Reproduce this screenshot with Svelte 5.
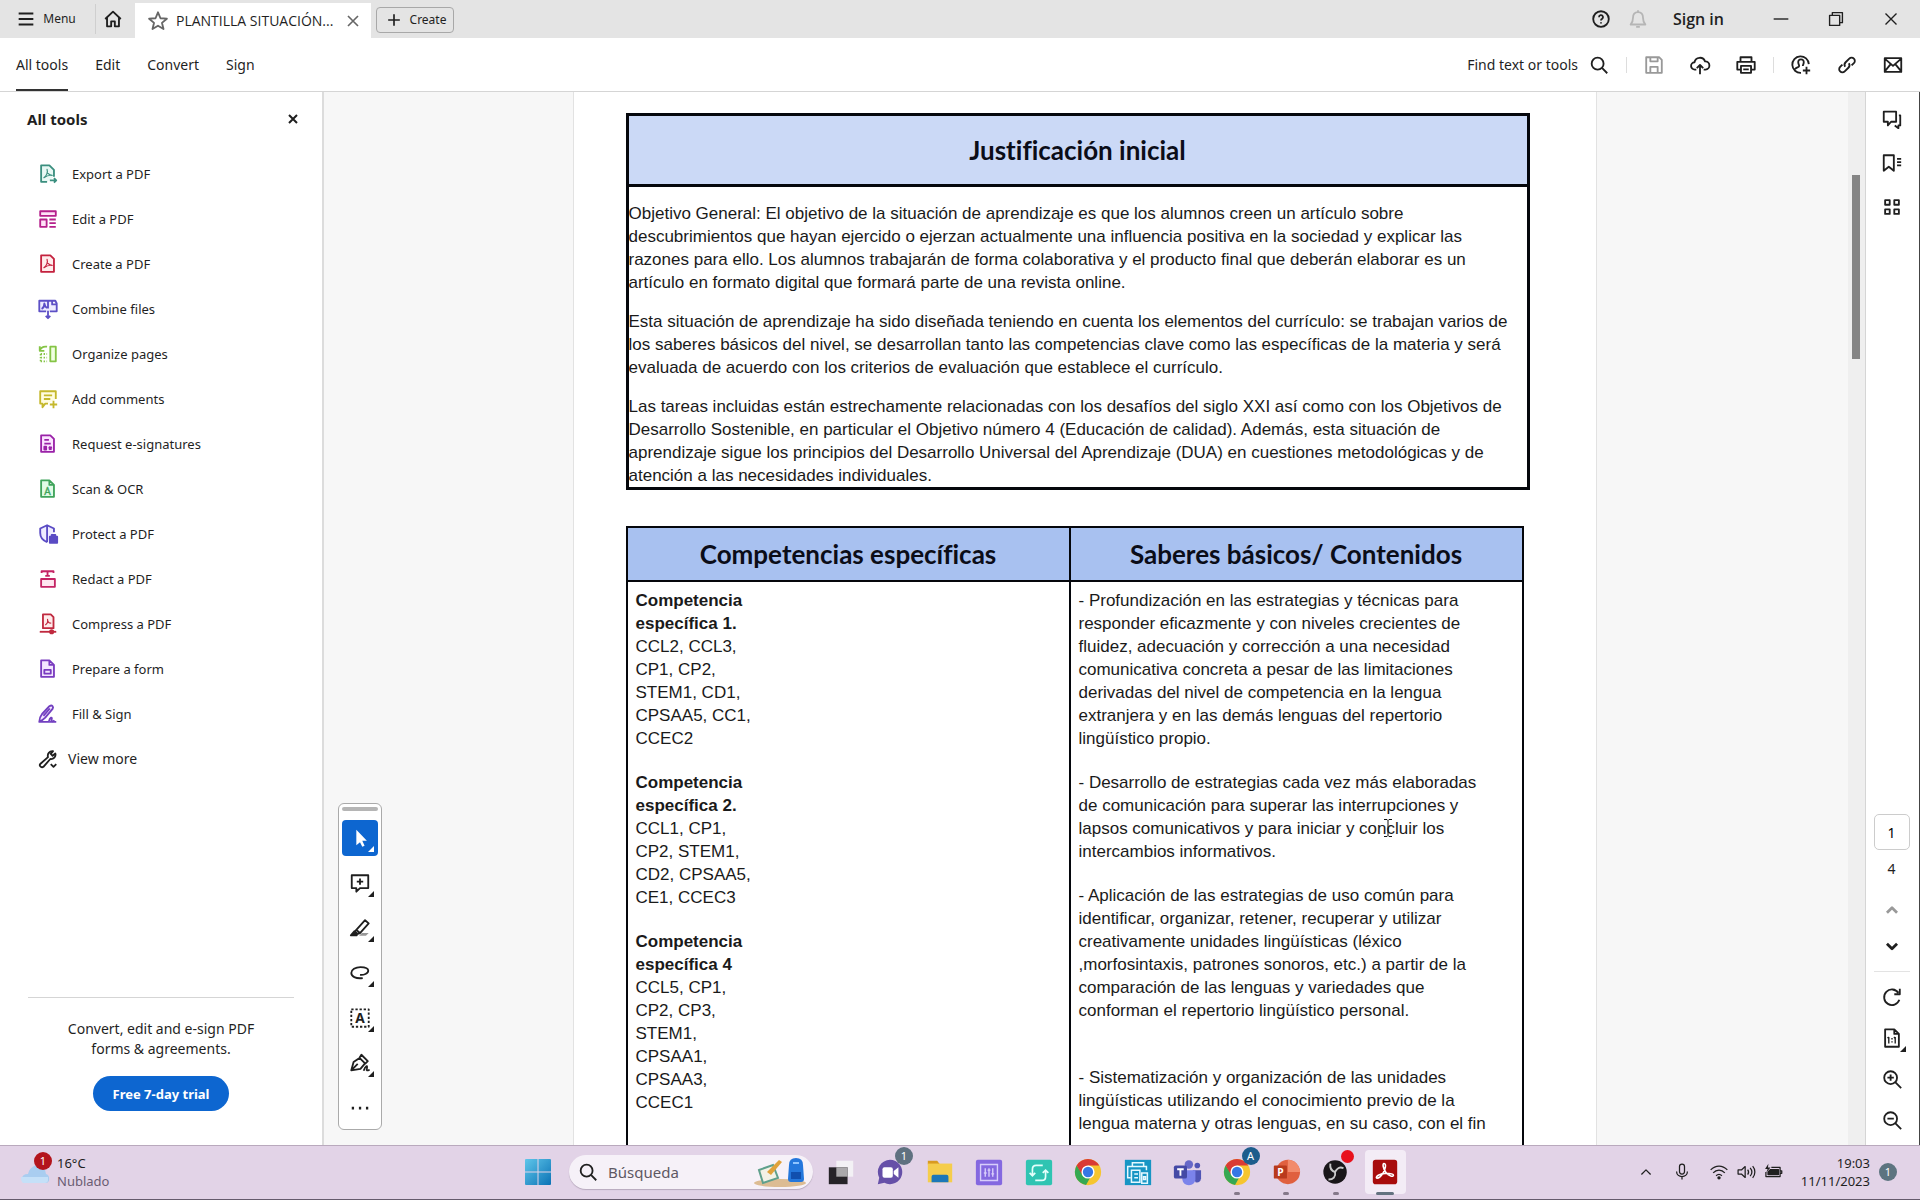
<script lang="ts">
	const docIcon = 'M4.5 2.5h8l5 5v12h-13z';
	const acro = 'M7.5 16c3-2 4.500-6 3.500-9 0 4 2 6 5.500 6.500-3-.5-6 .5-9 2.500z';

	const icons: Record<string, string> = {
		menu: '<path d="M4 6h16M4 12h16M4 18h16"/>',
		home: '<path d="M3.500 12L12 4l8.500 8M5.500 10.500V20h4.500v-5.500h4V20h4.500v-9.500"/>',
		star: '<path d="M12 2.500l2.700 6.500 7 .5-5.400 4.500 1.700 6.800-6-3.700-6 3.700 1.700-6.800L2.300 9.500l7-.5z"/>',
		close: '<path d="M6 6l12 12M18 6L6 18"/>',
		plus: '<path d="M12 5v14M5 12h14"/>',
		help: '<circle cx="12" cy="12" r="8.500"/><path d="M9.800 10a2.200 2.200 0 1 1 3.300 1.900c-.8.400-1.100.800-1.100 1.600"/><path d="M12 15.500v1.500"/>',
		bell: '<path d="M4 18h16c-1.500-1.500-2.500-3-2.500-7 0-4-2-6.500-5.500-6.500S6.500 7 6.500 11c0 4-1 5.500-2.500 7zM10 20.500h4M12 2.500v2"/>',
		minimize: '<path d="M4 12h16"/>',
		restore: '<path d="M5 8h11v11H5zM8 8V5h11v11h-3"/>',
		search: '<circle cx="10.500" cy="10.500" r="6.500"/><path d="M15.500 15.500L21 21"/>',
		save: '<path d="M3.500 3.500h14l3 3v14h-17zM8 3.500V8h8V3.500M8 20.500V14h8v6.500"/>',
		cloud: '<path d="M8 17H6.500a4 4 0 0 1-.500-8A6 6 0 0 1 17.500 8a4.500 4.500 0 0 1 .500 9h-2M12 22V12M8.500 15.500L12 12l3.500 3.500"/>',
		print: '<path d="M6 17H2.500V8.500h19V17H18M6 8.500v-5h12v5M6.500 13h11v7.500h-11zM9 16.700h6"/>',
		person: '<path d="M20.500 11A9 9 0 1 0 12 20.500M12 5.800c-2.200 0-3.200 1.600-3 3.700.2 1.700 1 2.500 1 3.500 0 1.500-3.500 1.500-4.500 3.500M12 5.800c2.200 0 3.200 1.600 3 3.700-.200 1.700-1 2.500-1 3.500M18 14v8M14 18h8"/>',
		link: '<path d="M10 14a4 4 0 0 1 .5-5l4-4a3.500 3.500 0 0 1 5 5l-2.500 2.500M14 10a4 4 0 0 1-.5 5l-4 4a3.500 3.500 0 0 1-5-5l2.500-2.500"/>',
		mail: '<path d="M3 4.500h18v15H3zM3 5l9 8 9-8M3 19l6.500-8M21 19l-6.500-8"/>',
		comments: '<path d="M3 4h13.500v11H11l-3.500 4v-4H3zM19.500 8H21v11h-2v3l-4-3"/>',
		bookmark: '<path d="M3 3.500h11v17l-5.500-4.500L3 20.500zM17.500 7.500H22M17.500 11H22M17.500 14.500H22"/>',
		grid: '<path d="M4.500 4.500h5v5h-5zM14.500 4.500h5v5h-5zM4.500 14.500h5v5h-5zM14.500 14.500h5v5h-5z"/>',
		up: '<path d="M6.500 15l5.500-5.500 5.500 5.500"/>',
		down: '<path d="M6.500 9.500L12 15l5.500-5.500"/>',
		rotate: '<path d="M19 7.500A8.500 8.500 0 1 0 20 15M20.500 3v6h-6"/>',
		fit: '<path d="M4.500 2.500h10l5 5v14h-15zM14.500 2.500v5h5"/><path d="M8.500 11v7M15.500 11v7M7 12l1.500-1M14 12l1.500-1M12 12v1.500M12 15.500v1.500" stroke-width="1.500"/>',
		zoomIn: '<circle cx="10.500" cy="10.500" r="7"/><path d="M15.500 15.500L22 22M7 10.500h7M10.500 7v7"/>',
		zoomOut: '<circle cx="10.500" cy="10.500" r="7"/><path d="M15.500 15.500L22 22M7 10.500h7"/>',
		select: '<path d="M8 3v17l4-3.500 2.500 5 2.500-1-2.500-5.500h5z" fill="currentColor" stroke="none"/>',
		addNote: '<path d="M3 3.500h18v14h-9l-4 4v-4H3zM12 7v7M8.500 10.500h7"/>',
		highlight: '<path d="M8 14L17.500 3.500l4 3.500L12 17.500zM8 14l-1.500 2 3 2.500 2.500-1"/><path d="M6 15.500L2 20h6.500z" fill="currentColor"/><path d="M11 20.500l3-3h7.500l-3 3z" fill="#999" stroke="none"/>',
		loop: '<path d="M12 14c4 .5 9-1.500 9-4.500 0-3-4-4-8.500-4C7 5.500 2.500 8.500 2.500 12s4.500 6.500 12.500 5.500"/>',
		text: '<path d="M2.500 2.500h19v19h-19z" stroke-dasharray="2.500 2"/><text x="12" y="17.500" text-anchor="middle" font-family="Noto Sans" font-weight="700" font-size="15" fill="currentColor" stroke="none">A</text>',
		pen: '<path d="M2.500 20l2.500-9 6.500-4.500 6 6-5 6zM2.500 20l7-7M11 7l2.500-4 7 7-3 3"/><path d="M16 20.500c2-6 4.500-6.500 3.500-2.500-1 3 1 2 3 1.500"/>',
		more: '<path d="M3 12h2.500M10.800 12h2.500M18.500 12H21" stroke-width="3"/>',
		exportPdf: `<path d="M11 20.500H4.500v-18h9l5 5V15"/><path d="${acro}" stroke-width="1.300"/><path d="M14 19h7M18.500 16.500L21 19l-2.500 2.500"/>`,
		editPdf: '<path d="M3.500 3.500h17v5h-17zM3.500 12.500h7v8h-7zM13.500 12.500h7M13.500 16.500h7M13.500 20.500h7"/>',
		createPdf: `<path d="M4.500 2.500h10l4 4v14h-14z"/><path d="${acro}" stroke-width="1.300"/>`,
		combine: '<path d="M10 14.500H2.500V3H20l1.500 3v8.500H14M12 3v8.500M5 12c2-1 3-3 3-6 .5 3 1.500 4 3 5M16.500 3v4h5M12 14v8M9.500 19.500L12 22l2.500-2.500"/>',
		organize: '<path d="M14.500 4h6v16h-6z"/><path d="M3 8.500c1-3.500 4-5 8-4.500M3 3.500v5h5" fill="none"/><path d="M4 12h7M4 16h7M4 20h7M4 12v8" stroke-dasharray="1.500 1.700"/>',
		comment: '<path d="M12 17H9l-3 4v-4H3.500V3.500h17V12M7.500 8h9M7.500 12h7M18 14v8M14 18h8"/>',
		esign: '<path d="M4.500 2.500h10l4 4v14h-14zM8 7.500h5M8 11.500h7"/><path d="M8 15h2v3H8zM13 15l3 3M16 15l-3 3"/>',
		ocr: '<path d="M4.500 2.500h9l5 5v13h-14zM13.500 2.500v5h5"/><text x="11.500" y="18" text-anchor="middle" font-family="Noto Sans" font-size="11" fill="currentColor" stroke-width=".4">A</text>',
		protect: '<path d="M11 21c-5-2-7.500-6-7.500-10V6L11 2.500 18.500 6v4M11 2.500V21"/><path d="M14 15h8v6.500h-8zM16 15v-2h4v2" fill="currentColor"/>',
		redact: '<path d="M4.500 12h15v8.500h-15zM5 5.500v-2h13v2M11.500 3.500V9M9 8.500h5"/>',
		compress: '<path d="M6.500 1.500h8.500l3 3v12H6.500z"/><path d="M9 13c2-1 3-3.500 2.500-6 0 3 1.500 4 4 4" stroke-width="1.300"/><path d="M3 20.500h18"/><circle cx="16" cy="20.500" r="1.800" fill="currentColor"/>',
		form: `<path d="M4.500 2.500h9l5 5v13h-14zM13.500 2.500v5h5M8 13h7v4H8z"/>`,
		fillSign: '<path d="M2.500 20.500c0-4 1-6 3-8.500l8-8.500c3-2 5 .5 3.500 3L9 16c-2 2-4 3.500-6.500 4.500zH21M7 14l7-8"/><path d="M13 20c1-5 4-5 3-2s2 2 3 1"/>',
		wrench: '<path d="M3.500 17.500l8.500-7.500c-1-3.500 1.500-7 5.500-6.500l-2.500 3 2 2 3-2.500c1 3.500-2 6.500-5.500 6L7 20.500c-2 1.500-5-1-3.500-3z"/><path d="M15 17.500l3 3 3-3"/>',
		mic: '<rect x="9" y="2.500" width="6" height="12" rx="3"/><path d="M5.500 11.500c0 8 13 8 13 0M12 17.500V21"/>',
		wifi: '<path d="M2 9.500c6-6 14-6 20 0M5 13c4-4.500 10-4.500 14 0M8.500 16.500c2-2 5-2 7 0"/><circle cx="12" cy="19" r="1.300" fill="currentColor"/>',
		volume: '<path d="M2.500 9.500h4L11 5.500v13l-4.500-4h-4zM14 9c1.500 2 1.500 4 0 6M17 7c2.500 3 2.500 7 0 10M20 5c3.500 4 3.500 10 0 14"/>',
		battery: '<path d="M10 6.500h10.500v11h-17V12M21 10.500h1.500v3H21"/><path d="M9 9h9.500v6H6v-3z" fill="currentColor"/><path d="M6.500 2L2.500 8.500h3L4 12.500 9 6.500H6z" fill="currentColor" stroke="none"/>'
	};

	const tools = [
		{ icon: 'exportPdf', label: 'Export a PDF', color: '#3b8f7f', fill: '#e8f8f4' },
		{ icon: 'editPdf', label: 'Edit a PDF', color: '#b5208c', fill: '#ffe3f7' },
		{ icon: 'createPdf', label: 'Create a PDF', color: '#c4223f', fill: '#ffecec' },
		{ icon: 'combine', label: 'Combine files', color: '#5d50c6', fill: '#eeecff' },
		{ icon: 'organize', label: 'Organize pages', color: '#85c446', fill: '#f1ffe2' },
		{ icon: 'comment', label: 'Add comments', color: '#c5b82c', fill: '#fffce0' },
		{ icon: 'esign', label: 'Request e-signatures', color: '#9a22a8', fill: '#fbe5ff' },
		{ icon: 'ocr', label: 'Scan & OCR', color: '#3fa45b', fill: '#e0fbe6' },
		{ icon: 'protect', label: 'Protect a PDF', color: '#5a4bc4', fill: '#eeecff' },
		{ icon: 'redact', label: 'Redact a PDF', color: '#c42465', fill: '#ffe6f0' },
		{ icon: 'compress', label: 'Compress a PDF', color: '#c0293f', fill: '#ffecec' },
		{ icon: 'form', label: 'Prepare a form', color: '#7a3cc0', fill: '#f3e6ff' },
		{ icon: 'fillSign', label: 'Fill & Sign', color: '#7240c0', fill: '#f3e6ff' }
	];

	const quickTools = ['select', 'addNote', 'highlight', 'loop', 'text', 'pen'];

	const intro = [
		'Objetivo General: El objetivo de la situación de aprendizaje es que los alumnos creen un artículo sobre\ndescubrimientos que hayan ejercido o ejerzan actualmente una influencia positiva en la sociedad y explicar las\nrazones para ello. Los alumnos trabajarán de forma colaborativa y el producto final que deberán elaborar es un\nartículo en formato digital que formará parte de una revista online.',
		'Esta situación de aprendizaje ha sido diseñada teniendo en cuenta los elementos del currículo: se trabajan varios de\nlos saberes básicos del nivel, se desarrollan tanto las competencias clave como las específicas de la materia y será\nevaluada de acuerdo con los criterios de evaluación que establece el currículo.',
		'Las tareas incluidas están estrechamente relacionadas con los desafíos del siglo XXI así como con los Objetivos de\nDesarrollo Sostenible, en particular el Objetivo número 4 (Educación de calidad). Además, esta situación de\naprendizaje sigue los principios del Desarrollo Universal del Aprendizaje (DUA) en cuestiones metodológicas y de\natención a las necesidades individuales.'
	];

	const competencias = [
		{ title: 'Competencia\nespecífica 1.', codes: 'CCL2, CCL3,\nCP1, CP2,\nSTEM1, CD1,\nCPSAA5, CC1,\nCCEC2' },
		{ title: 'Competencia\nespecífica 2.', codes: 'CCL1, CP1,\nCP2, STEM1,\nCD2, CPSAA5,\nCE1, CCEC3' },
		{ title: 'Competencia\nespecífica 4', codes: 'CCL5, CP1,\nCP2, CP3,\nSTEM1,\nCPSAA1,\nCPSAA3,\nCCEC1' }
	];

	const saberes = [
		'- Profundización en las estrategias y técnicas para\nresponder eficazmente y con niveles crecientes de\nfluidez, adecuación y corrección a una necesidad\ncomunicativa concreta a pesar de las limitaciones\nderivadas del nivel de competencia en la lengua\nextranjera y en las demás lenguas del repertorio\nlingüístico propio.',
		'- Desarrollo de estrategias cada vez más elaboradas\nde comunicación para superar las interrupciones y\nlapsos comunicativos y para iniciar y concluir los\nintercambios informativos.',
		'- Aplicación de las estrategias de uso común para\nidentificar, organizar, retener, recuperar y utilizar\ncreativamente unidades lingüísticas (léxico\n,morfosintaxis, patrones sonoros, etc.) a partir de la\ncomparación de las lenguas y variedades que\nconforman el repertorio lingüístico personal.',
		'- Sistematización y organización de las unidades\nlingüísticas utilizando el conocimiento previo de la\nlengua materna y otras lenguas, en su caso, con el fin'
	];

	const chrome =
		'<circle cx="16" cy="16" r="14" fill="#f6c52f"/><path d="M3.900 9a14 14 0 0 0 10 20.900L20 19l-9 .500z" fill="#35a853"/><path d="M3.900 9L10 19.500 16 9h12a14 14 0 0 0-24.100 0z" fill="#d93a35"/><circle cx="16" cy="16" r="7" fill="#fff"/><circle cx="16" cy="16" r="5.500" fill="#3577e5"/>';

	// Taskbar app tiles, drawn on a 32 unit grid
	const apps = [
		{ name: 'Task view', art: '<path d="M11 4h18v17H11z" fill="#f3f1f5"/><path d="M3 11h20v18H3z" fill="#262328"/><path d="M11 11h12v10H11z" fill="#aaa8ab"/>' },
		{ name: 'Chat', badge: '1', badgeColor: '#5f7180', art: '<path d="M16 3a13 13 0 1 1-6 24.500L3 29l1.500-7A13 13 0 0 1 16 3z" fill="#6650a8"/><rect x="8" y="11" width="11" height="11" rx="2" fill="#fff"/><path d="M20 15l5-4v11l-5-4z" fill="#fff"/>' },
		{ name: 'Explorer', art: '<path d="M3 4h10l3 4h-13z" fill="#d99b20"/><path d="M3 7h26v20H3z" fill="#f5cd4c"/><path d="M7 27v-6q0-2 2-2h14q2 0 2 2v6z" fill="#1c77b8"/>' },
		{ name: 'Mixer', art: '<rect x="2" y="3" width="28" height="27" rx="2" fill="#8468e0"/><path d="M7 8h18v17H7zM12 12v9M16 12v9M20 12v9M10.500 17h3M14.500 14h3M18.500 18h3" fill="none" stroke="#d7cdfb" stroke-width="1.500"/>' },
		{ name: 'Update', art: '<rect x="2" y="3" width="28" height="27" rx="2" fill="#2fc4b2"/><path d="M20 9h-7q-4 0-4 4v7M6 17l3 3 3-3M12 25h7q4 0 4-4v-7M20 17l3-3 3 3" fill="none" stroke="#e3fffb" stroke-width="1.800"/>' },
		{ name: 'Chrome', art: chrome },
		{ name: 'Printer', art: '<path d="M2 3h28v27H2z" fill="#1795c4"/><path d="M10 10V6h12v4M8 22H5V10h20v4M9 14h9v13H9zM12 18h4M12 22h4M20 17h6v11h-6zM22 21h2v3h-2z" fill="none" stroke="#e4f8ff" stroke-width="1.600"/>' },
		{ name: 'Teams', art: '<circle cx="18" cy="8" r="4.500" fill="#6668c8"/><circle cx="27" cy="9" r="3" fill="#5055b5"/><path d="M22 14h9v9q-1 5-6 4z" fill="#5055b5"/><path d="M11 14h14v10q-1 6-7 6t-7-6z" fill="#7b83eb"/><rect x="2" y="9" width="14" height="14" rx="2" fill="#4449a5"/><path d="M5.500 13h7M9 13v7" stroke="#fff" stroke-width="2"/>' },
		{ name: 'Chrome profile', badge: 'A', badgeColor: '#1d5d8c', running: true, art: chrome },
		{ name: 'PowerPoint', running: true, art: '<circle cx="18" cy="16" r="13" fill="#e0603f"/><path d="M18 3a13 13 0 0 1 13 13H18z" fill="#f28b6b"/><rect x="3" y="9" width="14" height="14" rx="1" fill="#b93a1c"/><text x="10" y="20" text-anchor="middle" font-family="Noto Sans" font-size="11" font-weight="700" fill="#fff">P</text>' },
		{ name: 'OBS', badge: ' ', badgeColor: '#e8101c', running: true, art: '<circle cx="15" cy="16" r="12.500" fill="#191619"/><path d="M10 7c-1 6 2 8 5 9 2-4 5-6 9-4M15 16c1 5-2 8-7 8" fill="none" stroke="#c9c9c9" stroke-width="2"/>' },
		{ name: 'Acrobat', active: true, art: '<rect x="3" y="3" width="26" height="26" rx="3" fill="#a80c0c"/><path d="M15 7c3 0 1 7-1 10s-5 6-7 5.500c-1.500-2 5-5 9-5s9 0 9 2-5 1-8-3-4-9.500-2-9.500z" fill="none" stroke="#fff" stroke-width="1.700"/>' }
	];

	let currentPage = $state('1');
	let activeTool = $state('select');
	let query = $state('');
</script>

{#snippet icon(name: string, size = 'md')}
	<svg class="icon {size}" viewBox="0 0 24 24" aria-hidden="true">{@html icons[name]}</svg>
{/snippet}

<div class="app">
	<header class="titlebar">
		<button class="menu">{@render icon('menu')}<span>Menu</span></button>
		<button class="home" aria-label="Home">{@render icon('home')}</button>
		<div class="tab">
			<span class="star">{@render icon('star')}</span>
			<span class="name">PLANTILLA SITUACIÓN...</span>
			<button class="grey" aria-label="Close tab">{@render icon('close', 'sm')}</button>
		</div>
		<button class="create">{@render icon('plus', 'sm')}<span>Create</span></button>
		<div class="window">
			<button aria-label="Help">{@render icon('help')}</button>
			<button class="bell" aria-label="Notifications">{@render icon('bell')}</button>
			<button class="signin">Sign in</button>
			<button class="wide" aria-label="Minimize">{@render icon('minimize', 'md thin')}</button>
			<button class="wide" aria-label="Restore">{@render icon('restore', 'md thin')}</button>
			<button class="wide" aria-label="Close">{@render icon('close', 'md thin')}</button>
		</div>
	</header>

	<nav class="toolbar">
		<a class="current" href="#all">All tools</a>
		<a href="#edit">Edit</a>
		<a href="#convert">Convert</a>
		<a href="#sign">Sign</a>
		<div class="actions">
			<button class="find">Find text or tools {@render icon('search')}</button>
			<button class="save" aria-label="Save">{@render icon('save')}</button>
			<button aria-label="Upload">{@render icon('cloud')}</button>
			<button aria-label="Print">{@render icon('print')}</button>
			<button class="share" aria-label="Share">{@render icon('person')}</button>
			<button aria-label="Copy link">{@render icon('link')}</button>
			<button aria-label="Email">{@render icon('mail')}</button>
		</div>
	</nav>

	<div class="body">
		<aside class="sidebar">
			<div class="heading">
				<h2>All tools</h2>
				<button aria-label="Close panel">{@render icon('close', 'xs')}</button>
			</div>
			<ul>
				{#each tools as tool}
					<li>
						<button>
							<span class="tint" style="color: {tool.color}; fill: {tool.fill}">{@render icon(tool.icon)}</span>
							{tool.label}
						</button>
					</li>
				{/each}
				<li class="view-more"><button>{@render icon('wrench')}View more</button></li>
			</ul>
			<div class="promo">
				<p>Convert, edit and e-sign PDF<br />forms &amp; agreements.</p>
				<button>Free 7-day trial</button>
			</div>
		</aside>

		<main class="canvas">
			<div class="quick">
				<span class="grip"></span>
				{#each quickTools as name}
					<button class:on={activeTool === name} aria-label={name} onclick={() => (activeTool = name)}>
						{@render icon(name)}
						<i class="corner"></i>
					</button>
				{/each}
				<button aria-label="More">{@render icon('more')}</button>
			</div>

			<div class="scroller">
				<article class="page">
					<section class="intro">
						<h1>Justificación inicial</h1>
						<div class="text">
							{#each intro as paragraph}
								<p>{paragraph}</p>
							{/each}
						</div>
					</section>

					<table>
						<thead>
							<tr>
								<th>Competencias específicas</th>
								<th>Saberes básicos/ Contenidos</th>
							</tr>
						</thead>
						<tbody>
							<tr>
								<td>
									{#each competencias as item}
										<p><b>{item.title}</b><br />{item.codes}</p>
									{/each}
								</td>
								<td>
									{#each saberes as item, i}
										<p class:apart={i === 3}>{item}</p>
									{/each}
								</td>
							</tr>
						</tbody>
					</table>
				</article>
			</div>
			<svg class="caret" viewBox="0 0 10 20" aria-hidden="true">
				<path d="M1 1.500h3l1 1 1-1h3M5 2.500v15M1 18.500h3l1-1 1 1h3" />
			</svg>
			<div class="track"><div class="thumb"></div></div>
		</main>

		<aside class="rail">
			<div class="panels">
				<button aria-label="Comments">{@render icon('comments')}</button>
				<button aria-label="Bookmarks">{@render icon('bookmark')}</button>
				<button aria-label="Page thumbnails">{@render icon('grid')}</button>
			</div>
			<input aria-label="Page" bind:value={currentPage} />
			<span class="total">4</span>
			<button class="step dim" aria-label="Previous page">{@render icon('up', 'md bold')}</button>
			<button class="step" aria-label="Next page">{@render icon('down', 'md bold')}</button>
			<div class="zoom">
				<button aria-label="Rotate">{@render icon('rotate')}</button>
				<button aria-label="Page fit">{@render icon('fit')}<i class="corner"></i></button>
				<button aria-label="Zoom in">{@render icon('zoomIn')}</button>
				<button aria-label="Zoom out">{@render icon('zoomOut')}</button>
			</div>
		</aside>
	</div>

	<footer class="taskbar">
		<button class="weather">
			<span class="cloud">
				<svg viewBox="0 0 30 26" aria-hidden="true">
					<path d="M2 20q0-5 6-5 1-6 8-9 10 1 10 9 4 1 3 7l-2 2H5q-3-1-3-4z" fill="#a9cdf0" />
					<path d="M1 18h27v3q0 3-3 3H4q-3 0-3-6z" fill="#c5e0f8" />
				</svg>
				<span class="badge alert">1</span>
			</span>
			<span class="stack"><span>16°C</span><span class="muted">Nublado</span></span>
		</button>

		<div class="dock">
			<button class="start" aria-label="Start">
				<svg viewBox="0 0 26 26" aria-hidden="true">
					<defs>
						<linearGradient id="win" x1="0" y1="0" x2="1" y2="1">
							<stop offset="0" stop-color="#5fc6ea" />
							<stop offset="1" stop-color="#0b72b5" />
						</linearGradient>
					</defs>
					<path d="M0 1q0-1 1-1h11.500v12.500H0zM13.500 0H25q1 0 1 1v11.500H13.500zM0 13.500h12.500V26H1q-1 0-1-1zM13.500 13.500H26V25q0 1-1 1H13.500z" fill="url(#win)" />
				</svg>
			</button>
			<label class="search">
				{@render icon('search')}
				<input placeholder="Búsqueda" bind:value={query} />
				<svg class="school" viewBox="0 0 54 32" aria-hidden="true">
					<ellipse cx="27" cy="27" rx="26" ry="4" fill="#dcbc93" />
					<path d="M6 14l14-5 5 13-15 5z" fill="#f3f1e6" stroke="#5fa08c" stroke-width="2" />
					<path d="M14 16L26 4l3 2-11 13z" fill="#e0a23b" />
					<path d="M36 9q0-7 7-7t7 7l1 14q0 3-3 3H38q-3 0-3-3z" fill="#2477dc" />
					<path d="M38 16h10v7H38z" fill="#114fae" />
					<path d="M40 7h6" stroke="#8fc4ff" stroke-width="2" />
				</svg>
			</label>
			<div class="apps">
				{#each apps as app}
					<button class="app-tile" class:active={app.active} aria-label={app.name}>
						<svg viewBox="0 0 32 32" aria-hidden="true">{@html app.art}</svg>
						{#if app.badge}
							<span class="badge" class:small={app.badge === ' '} style="background: {app.badgeColor}">{app.badge}</span>
						{/if}
						{#if app.running || app.active}<i class="dot"></i>{/if}
					</button>
				{/each}
			</div>
		</div>

		<div class="tray">
			<button aria-label="Hidden icons">{@render icon('up', 'tray-icon')}</button>
			<button class="mic" aria-label="Microphone">{@render icon('mic', 'tray-icon')}</button>
			<button class="status" aria-label="Network, volume and battery">
				{@render icon('wifi', 'tray-icon')}
				{@render icon('volume', 'tray-icon')}
				{@render icon('battery', 'tray-icon')}
			</button>
			<button class="stack clock"><span>19:03</span><span>11/11/2023</span></button>
			<span class="count">1</span>
		</div>
	</footer>
</div>

<style>
	:global(body) {
		margin: 0;
	}

	.app {
		display: flex;
		flex-direction: column;
		height: 100vh;
		overflow: hidden;
		font-family: 'Noto Sans', sans-serif;
		font-size: 13px;
		line-height: 20px;
		color: #1f1f1f;
		background: #fff;
	}

	.app *,
	.app *::before {
		box-sizing: border-box;
	}

	button {
		display: flex;
		align-items: center;
		justify-content: center;
		padding: 0;
		border: none;
		background: none;
		font: inherit;
		color: inherit;
		cursor: pointer;
	}

	a {
		color: inherit;
		text-decoration: none;
	}

	.icon {
		flex: none;
		width: 22px;
		height: 22px;
		fill: none;
		stroke: currentColor;
		stroke-width: 2;
		stroke-linejoin: round;
	}

	.sm {
		width: 20px;
		height: 20px;
	}

	.xs {
		width: 16px;
		height: 16px;
		stroke-width: 3;
	}

	.thin {
		stroke-width: 1.5;
	}

	.bold {
		stroke-width: 3;
	}

	.tray-icon {
		width: 20px;
		height: 20px;
		stroke-width: 1.5;
	}

	/* title bar */
	.titlebar {
		display: flex;
		flex: none;
		height: 38px;
		background: #e4e4e4;
	}

	.menu {
		gap: 6px;
		width: 96px;
		height: 30px;
		padding-right: 4px;
		align-self: center;
		border-right: 1px solid #cfcfcf;
		font-size: 12px;
	}

	.home {
		width: 34px;
	}

	.tab {
		display: flex;
		align-items: center;
		gap: 7px;
		width: 236px;
		margin: 3px 5px 0;
		padding: 0 8px 0 12px;
		background: #fff;
	}

	.tab .name {
		flex: 1;
		font-family: 'Open Sans', sans-serif;
		font-size: 14px;
		white-space: nowrap;
	}

	.star,
	.grey {
		display: flex;
		color: #666;
	}

	.create {
		gap: 6px;
		width: 78px;
		height: 26px;
		margin-top: 7px;
		border: 1px solid #a8a8a8;
		border-radius: 4px;
		font-size: 12px;
	}

	.window {
		display: flex;
		align-items: center;
		margin-left: auto;
		padding-right: 2px;
	}

	.window button {
		height: 38px;
	}

	.window .bell {
		margin-left: 15px;
		color: #b5b5b5;
	}

	.window .signin {
		margin: 0 29px 0 24px;
		font-family: 'Open Sans', sans-serif;
		font-size: 16px;
		font-weight: 600;
	}

	.window .wide {
		width: 55px;
	}

	/* toolbar */
	.toolbar {
		display: flex;
		flex: none;
		align-items: stretch;
		gap: 27px;
		height: 54px;
		padding: 0 16px;
		border-bottom: 1px solid #d5d5d5;
		font-size: 14px;
		line-height: 54px;
	}

	.toolbar .current {
		border-bottom: 2px solid #333;
	}

	.actions {
		display: flex;
		align-items: center;
		gap: 24px;
		margin-left: auto;
	}

	.find {
		gap: 10px;
	}

	.save {
		color: #999;
	}

	.save,
	.share {
		position: relative;
		margin-left: 9px;
	}

	.save::before,
	.share::before {
		content: '';
		position: absolute;
		left: -17px;
		width: 1px;
		height: 16px;
		background: #ddd;
	}

	.body {
		display: grid;
		flex: 1;
		grid-template-columns: 324px 1fr 54px;
		min-height: 0;
	}

	/* tools panel */
	.sidebar {
		display: flex;
		flex-direction: column;
		border-right: 2px solid #dcdcdc;
	}

	.heading {
		display: flex;
		align-items: center;
		justify-content: space-between;
		padding: 17px 21px 11px 27px;
	}

	h2 {
		margin: 0;
		font-size: 15px;
		line-height: 20px;
		font-weight: 700;
	}

	ul {
		margin: 0;
		padding: 11px 0 0 37px;
		list-style: none;
	}

	li button {
		gap: 13px;
		height: 45px;
	}

	.view-more button {
		gap: 9px;
		font-size: 14px;
	}

	.tint {
		display: flex;
	}

	.tint :global(.icon) {
		fill: inherit;
	}

	.promo {
		margin: auto 28px 34px;
		padding-top: 21px;
		border-top: 1px solid #d5d5d5;
		font-size: 14px;
		text-align: center;
	}

	.promo p {
		margin: 0 0 17px;
	}

	.promo button {
		width: 136px;
		height: 35px;
		margin: 0 auto;
		border-radius: 18px;
		background: #0d66d0;
		color: #fff;
		font-size: 13px;
		font-weight: 700;
	}

	/* document */
	.canvas {
		position: relative;
		display: flex;
		min-width: 0;
		min-height: 0;
		background: #f7f7f7;
	}

	.scroller {
		display: flex;
		flex: 1;
		justify-content: center;
		overflow: hidden;
		padding-right: 3px;
	}

	.page {
		flex: 0 1 1024px;
		height: max-content;
		min-height: 100%;
		padding: 21px 66px 0 52px;
		border: solid #e2e2e2;
		border-width: 0 1px;
		background: #fff;
		font-family: 'Liberation Sans', Arial, sans-serif;
		font-size: 17px;
		line-height: 23px;
		color: #1a1a1a;
	}

	p {
		margin: 0;
	}

	.page p {
		white-space: pre-line;
	}

	.intro {
		border: 3px solid #05070c;
	}

	h1 {
		margin: 0;
		border-bottom: 3px solid #05070c;
		background: #cbd9f6;
	}

	h1,
	th {
		font-family: Lato, sans-serif;
		font-size: 26px;
		font-weight: 700;
		font-variant-ligatures: none;
		line-height: 68px;
		text-align: center;
		color: #0b0d18;
	}

	.intro .text {
		display: flex;
		flex-direction: column;
		gap: 16px;
		padding-top: 15px;
	}

	table {
		width: calc(100% - 6px);
		margin-top: 36px;
		border-collapse: collapse;
		table-layout: fixed;
	}

	th,
	td {
		border: 2px solid #05070c;
	}

	th {
		padding: 0;
		background: #a8c1f0;
		line-height: 52px;
	}

	th:first-child {
		width: 443px;
	}

	td {
		padding: 7px 7px 10px 8px;
		vertical-align: top;
	}

	td p + p {
		margin-top: 21px;
	}

	td p.apart {
		margin-top: 44px;
	}

	.track {
		flex: none;
		width: 18px;
		padding: 83px 5px 0 4px;
		background: #efefef;
		border-right: 1px solid #d5d5d5;
	}

	.thumb {
		height: 184px;
		background: #858585;
	}

	.caret {
		position: absolute;
		left: 1059px;
		top: 726px;
		width: 10px;
		height: 20px;
		fill: none;
		stroke: #111;
	}

	.quick {
		position: absolute;
		left: 14px;
		bottom: 15px;
		display: flex;
		flex-direction: column;
		gap: 9px;
		padding: 3px;
		border: 1px solid #aaa;
		border-radius: 6px;
		background: #fff;
	}

	.grip {
		height: 4px;
		border-radius: 2px;
		background: #b5b5b5;
	}

	.quick button {
		position: relative;
		width: 36px;
		height: 36px;
		border-radius: 4px;
	}

	.quick .on {
		background: #0d66d0;
		color: #fff;
	}

	.corner {
		position: absolute;
		right: 4px;
		bottom: 4px;
		border-top: 6px solid transparent;
		border-right: 6px solid currentColor;
	}

	/* right rail */
	.rail {
		display: flex;
		flex-direction: column;
		align-items: center;
		padding: 16px 2px 7px 0;
		border-right: 1px solid #444;
	}

	.panels {
		display: flex;
		flex-direction: column;
		gap: 22px;
		margin-bottom: auto;
	}

	.rail input {
		width: 36px;
		height: 36px;
		padding: 0;
		border: 1px solid #ccc;
		border-radius: 5px;
		font: inherit;
		font-size: 14px;
		text-align: center;
	}

	.total {
		margin: 9px 0 13px;
		font-size: 14px;
	}

	.step {
		height: 36px;
	}

	.dim {
		color: #999;
	}

	.zoom {
		display: flex;
		flex-direction: column;
		align-items: center;
		gap: 5px;
		margin-top: 7px;
		padding-top: 7px;
		border-top: 1px solid #e3e3e3;
	}

	.zoom button {
		position: relative;
		width: 36px;
		height: 36px;
	}

	/* taskbar */
	.taskbar {
		display: grid;
		flex: none;
		grid-template-columns: 1fr auto 1fr;
		height: 55px;
		padding-bottom: 1px;
		border-top: 1px solid #b9a9bd;
		border-bottom: 1px solid #655a6c;
		background: #e2d3e7;
		line-height: 18px;
	}

	.weather {
		justify-self: start;
		gap: 7px;
		padding-left: 20px;
		text-align: left;
	}

	.cloud {
		position: relative;
		display: flex;
		width: 30px;
	}

	.stack {
		display: flex;
		flex-direction: column;
		align-items: flex-start;
	}

	.muted {
		color: #6a5c73;
	}

	.badge {
		position: absolute;
		top: 0;
		right: 2px;
		width: 18px;
		height: 18px;
		border-radius: 50%;
		font-size: 11px;
		line-height: 18px;
		text-align: center;
		color: #fff;
	}

	.badge.small {
		top: 3px;
		right: 7px;
		width: 13px;
		height: 13px;
	}

	.badge.alert {
		top: -7px;
		right: -2px;
		background: #b3141c;
	}

	.dock {
		display: flex;
		align-items: center;
	}

	.start {
		width: 55px;
		height: 50px;
	}

	.start svg {
		width: 26px;
		height: 26px;
	}

	.search {
		display: flex;
		align-items: center;
		gap: 9px;
		width: 244px;
		height: 34px;
		margin: 0 3px 0 4px;
		padding: 0 6px 0 8px;
		border-radius: 17px;
		background: #f6f1f8;
		box-shadow: 0 1px 1px #b7a9bd;
	}

	.search input {
		flex: 1;
		min-width: 0;
		padding: 0;
		border: none;
		background: none;
		font: inherit;
		font-size: 15px;
	}

	.search input::placeholder {
		color: #5e5863;
	}

	.school {
		width: 54px;
		height: 32px;
	}

	.apps {
		display: flex;
		width: 594px;
	}

	.app-tile {
		position: relative;
		flex: 1;
		height: 50px;
	}

	.app-tile svg {
		width: 30px;
		height: 30px;
		z-index: 1;
	}

	.app-tile.active::before {
		content: '';
		position: absolute;
		inset: 3px 4px;
		border-radius: 4px;
		background: #f3ecf6;
	}

	.app-tile .badge {
		z-index: 2;
	}

	.dot {
		position: absolute;
		bottom: 2px;
		width: 6px;
		height: 3px;
		border-radius: 2px;
		background: #85798a;
	}

	.active .dot {
		width: 18px;
		background: #63727f;
	}

	.tray {
		display: flex;
		align-items: center;
		justify-content: flex-end;
		padding-right: 23px;
	}

	.mic {
		margin: 0 17px 0 16px;
	}

	.status {
		gap: 7px;
	}

	.clock {
		align-items: flex-end;
		justify-content: center;
		width: 87px;
	}

	.count {
		width: 18px;
		height: 18px;
		margin-left: 9px;
		border-radius: 50%;
		background: #5d7480;
		color: #fff;
		font-size: 11px;
		text-align: center;
	}
</style>
